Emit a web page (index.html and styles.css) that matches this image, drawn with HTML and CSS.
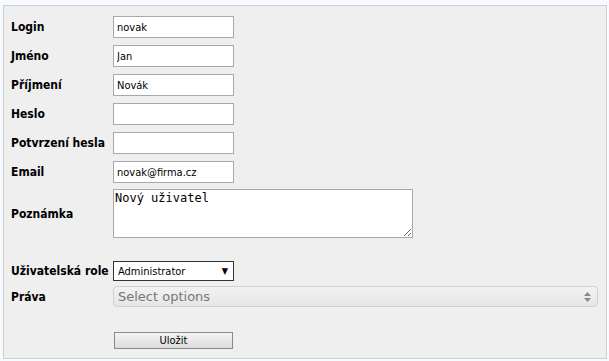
FILE: index.html
```html
<!DOCTYPE html>
<html lang="cs">
<head>
    <meta charset="UTF-8">
    <title>Uživatel</title>
    <link rel="stylesheet" href="styles.css">
</head>
<body>
    <form class="user-form">
        <div class="row">
            <label>Login</label>
            <input type="text" class="field" value="novak">
        </div>
        <div class="row">
            <label>Jméno</label>
            <input type="text" class="field" value="Jan">
        </div>
        <div class="row row-surname">
            <label>Příjmení</label>
            <input type="text" class="field" value="Novák">
        </div>
        <div class="row">
            <label>Heslo</label>
            <input type="password" class="field">
        </div>
        <div class="row">
            <label>Potvrzení hesla</label>
            <input type="password" class="field">
        </div>
        <div class="row">
            <label>Email</label>
            <input type="text" class="field" value="novak@firma.cz">
        </div>
        <div class="row row-note">
            <label>Poznámka</label>
            <textarea class="note">Nový uživatel</textarea>
        </div>
        <div class="row row-role">
            <label>Uživatelská role</label>
            <div class="role-select">
                <span>Administrator</span>
                <span class="arrow">▼</span>
            </div>
        </div>
        <div class="row row-rights">
            <label>Práva</label>
            <div class="multi-select">
                <span>Select options</span>
                <svg width="7" height="10" viewBox="0 0 7 10"><path d="M3.5 0 L7 4 H0 Z M0 6 H7 L3.5 10 Z" fill="#888"/></svg>
            </div>
        </div>
        <div class="row row-submit">
            <label></label>
            <button type="button" class="save-btn">Uložit</button>
        </div>
    </form>
</body>
</html>
```

FILE: styles.css
```css
* {
    margin: 0;
    padding: 0;
    box-sizing: border-box;
}
body {
    background: #f7fbff;
    padding: 5px 2px 3px 3px;
    font-family: 'DejaVu Sans Condensed', 'DejaVu Sans', sans-serif;
    color: #000;
}
.user-form {
    background: #efefef;
    border: 1px solid #cfcfcf;
    height: 354px;
    padding: 10px 7px 0 7px;
}
.row {
    display: flex;
    align-items: center;
    margin-bottom: 7px;
}
.row label {
    width: 102px;
    flex-shrink: 0;
    font-size: 12px;
    font-weight: bold;
    white-space: nowrap;
}
.field {
    width: 121px;
    height: 22px;
    border: 1px solid #a9a9a9;
    background: #fff;
    padding: 0 3px;
    font-family: 'DejaVu Sans Condensed', sans-serif;
    font-size: 11px;
    color: #000;
}
.row-surname {
    margin-top: 1px;
}
.row-note {
    margin-top: -1px;
}
.note {
    width: 300px;
    height: 49px;
    border: 1px solid #a9a9a9;
    background: #fff;
    padding: 1px;
    font-family: 'DejaVu Sans Mono', monospace;
    font-size: 12px;
    color: #000;
    display: block;
}
.row-role {
    margin-top: 23px;
    margin-bottom: 5px;
}
.role-select {
    width: 121px;
    height: 20px;
    border: 1px solid #333;
    background: #fff;
    display: flex;
    align-items: center;
    justify-content: space-between;
    padding: 0 5px 0 4px;
    font-size: 11px;
}
.role-select .arrow {
    font-size: 9px;
}
.multi-select {
    width: 485px;
    height: 21px;
    border: 1px solid #d0d0d0;
    border-radius: 4px;
    background: linear-gradient(#f2f2f2, #e6e6e6);
    display: flex;
    align-items: center;
    justify-content: space-between;
    padding: 0 6px 0 4px;
    font-family: 'DejaVu Sans', sans-serif;
    font-size: 13px;
    color: #777;
}
.row-submit {
    margin-top: 25px;
}
.save-btn {
    width: 119px;
    height: 17px;
    margin-left: 1px;
    border: 1px solid #8a8a8a;
    background: linear-gradient(#f4f4f4, #dcdcdc);
    font-family: 'DejaVu Sans Condensed', sans-serif;
    font-size: 11px;
    color: #000;
}
```
